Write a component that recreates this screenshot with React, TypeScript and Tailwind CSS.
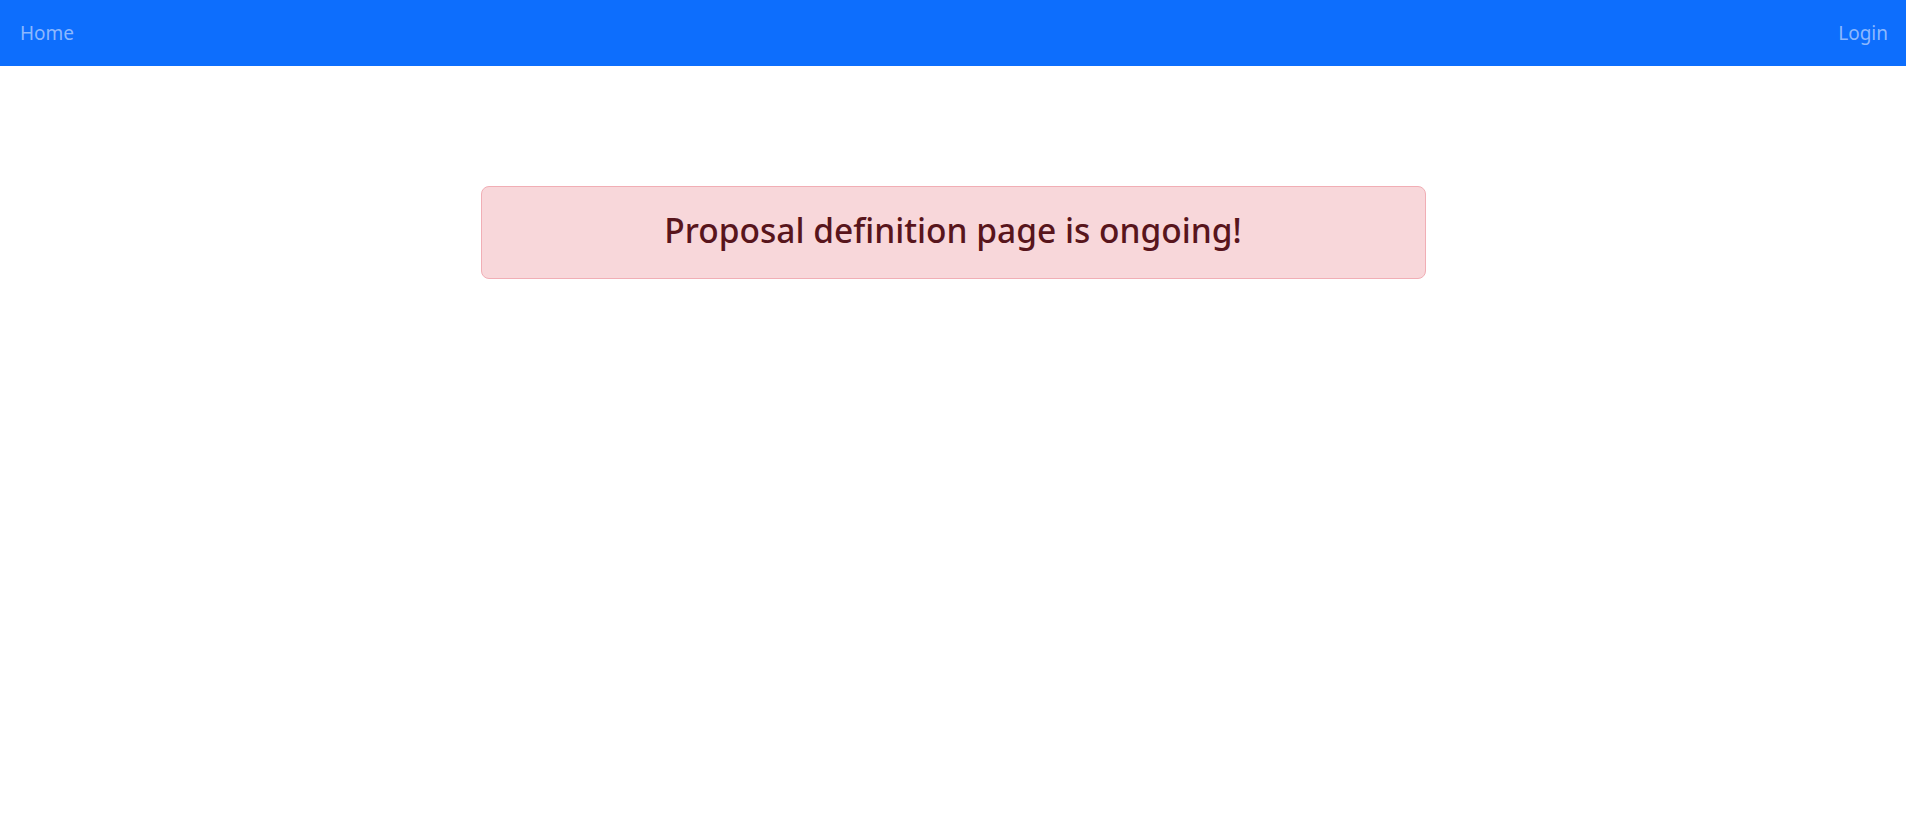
import React from "react";

const App = () => {
  return (
    <div className="min-h-screen bg-white font-['Noto_Sans',sans-serif]">
      {/* top bar */}
      <nav className="flex h-[66px] items-center justify-between bg-[#0d6efd] pl-5 pr-[18px]">
        <a className="text-[19px] text-[#8cb8fe] cursor-pointer">Home</a>
        <a className="text-[19px] text-[#8cb8fe] cursor-pointer">Login</a>
      </nav>

      <div className="mx-auto mt-[120px] flex h-[93px] w-[945px] items-center justify-center rounded-[8px] border border-[#f1aeb5] bg-[#f8d7da] pb-1">
        <h3 className="text-[33.5px] font-medium leading-none text-[#58151c]">
          Proposal definition page is ongoing!
        </h3>
      </div>
    </div>
  );
};

export default App;
